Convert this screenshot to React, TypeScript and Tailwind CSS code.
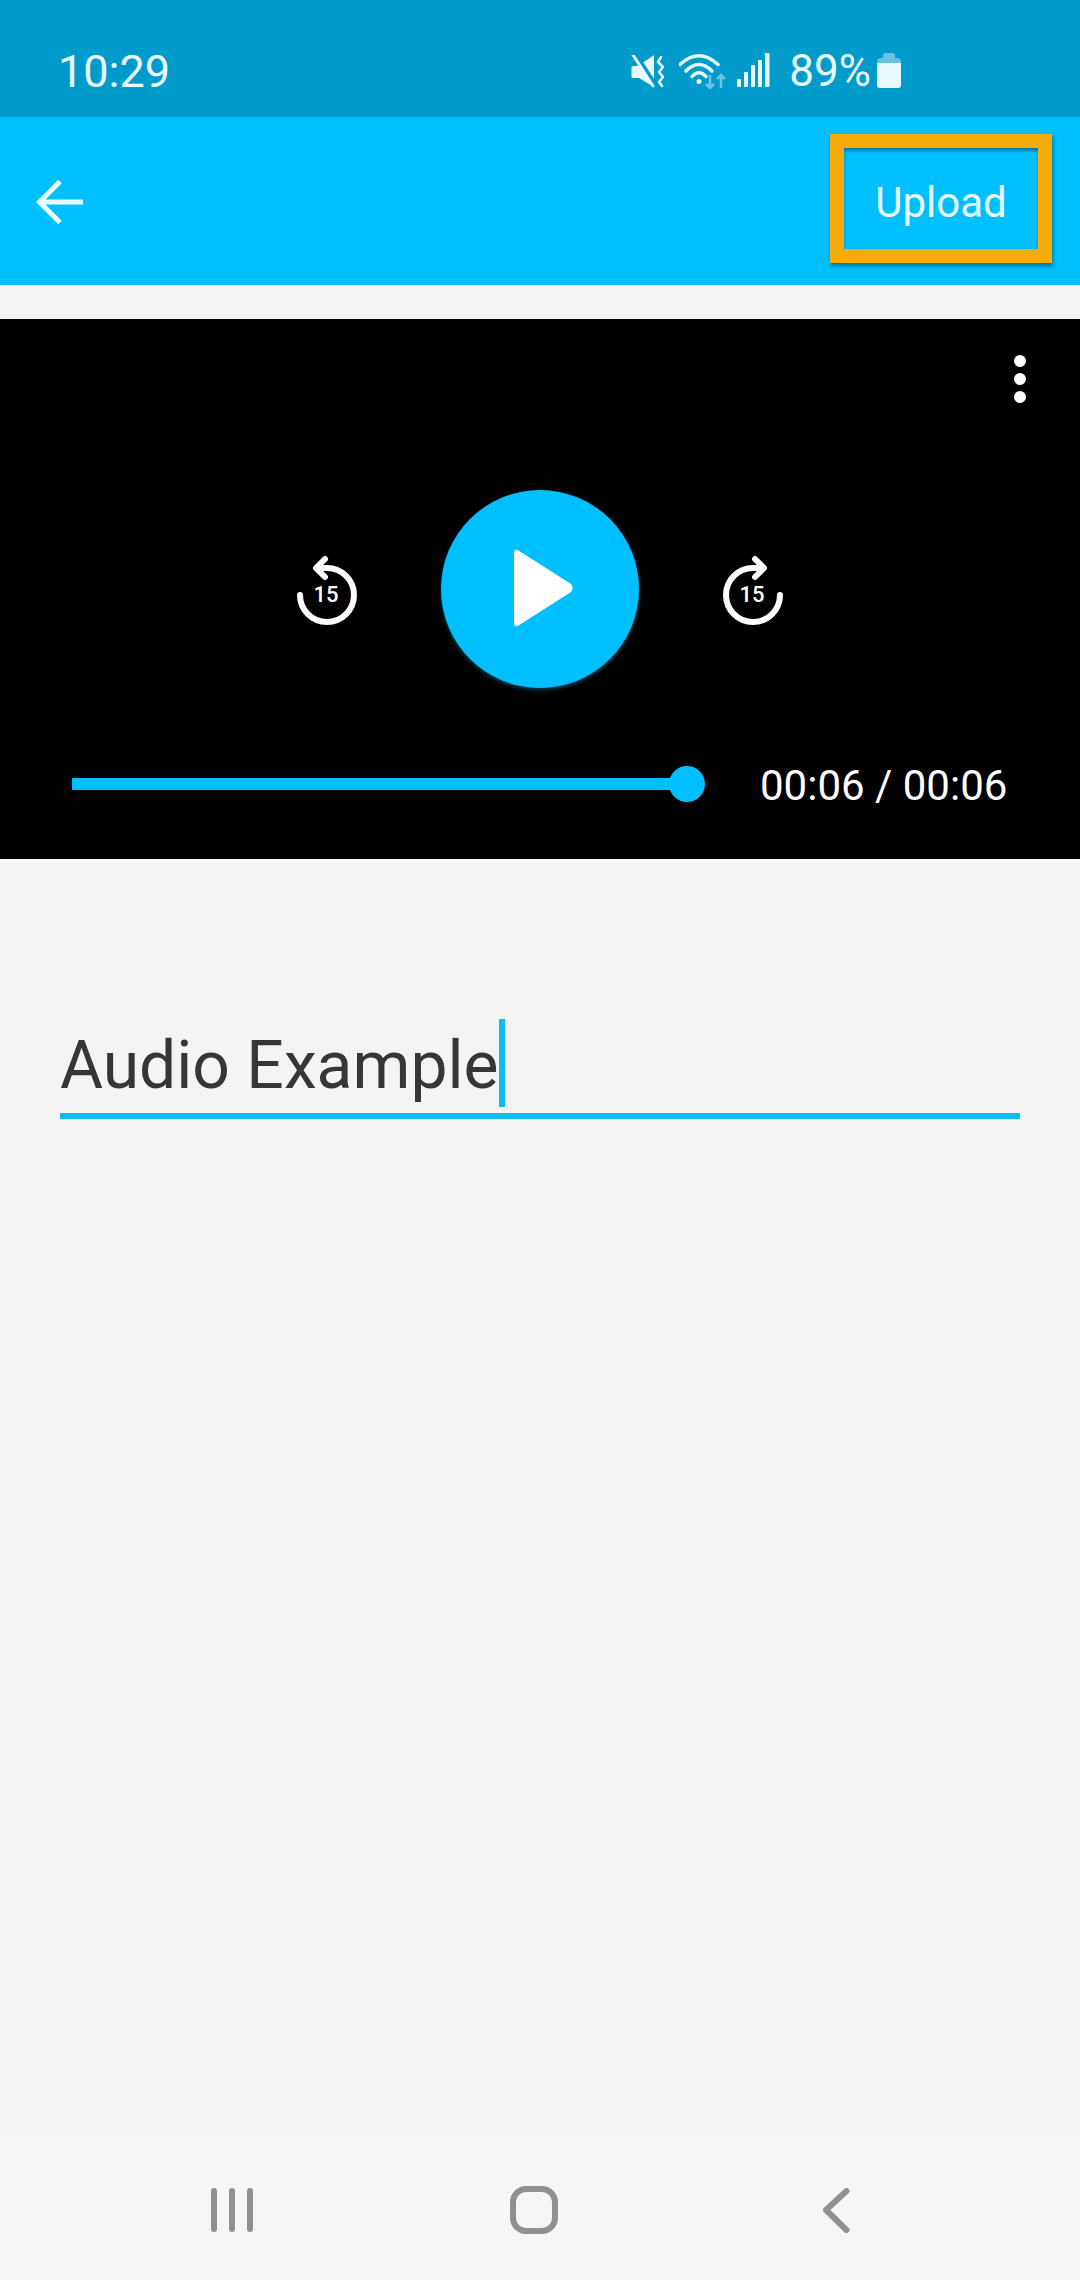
function StatusIcons() {
  return (
    <div className="flex items-start">
      {/* mute */}
      <svg width="36" height="34" viewBox="0 0 36 34" fill="none" className="ml-[1px] mt-[1px]">
        <path d="M2 11h5L23 0v32L8 23H2q-1.500 0-1.500-1.500v-9Q.5 11 2 11z" fill="#e8f8fc" />
        <path d="M4 -1l22 34" stroke="#019bcb" strokeWidth="5" />
        <path d="M2 0l20 31" stroke="#e8f8fc" strokeWidth="3" strokeLinecap="round" />
        <path d="M30 2l-3 5 5 5-4 5 4 5-4 5 3 4" stroke="#e8f8fc" strokeWidth="2.500" strokeLinecap="round" strokeLinejoin="round" />
      </svg>
      {/* wifi with data arrows */}
      <svg width="48" height="36" viewBox="0 0 48 36" fill="none" className="ml-[12px] -mt-[1px]">
        <path d="M1 11.500Q20-6 39 11.500" stroke="#e8f8fc" strokeWidth="3.500" strokeLinecap="round" />
        <path d="M7 18Q20 5 33 18" stroke="#e8f8fc" strokeWidth="3.500" strokeLinecap="round" />
        <path d="M13 23.500Q20 16 27 23.500" stroke="#e8f8fc" strokeWidth="3.500" strokeLinecap="round" />
        <circle cx="20" cy="28.500" r="2.500" fill="#e8f8fc" />
        <path d="M31 22v13m-4-4l4 4 4-4M42 35V22m-4 4l4-4 4 4" stroke="#6fc3e0" strokeWidth="2.500" />
      </svg>
      {/* signal */}
      <svg width="33" height="34" viewBox="0 0 33 34" className="ml-[10px] -mt-[1px]" fill="#e8f8fc">
        <rect x="0" y="26" width="4" height="8" rx="1" />
        <rect x="7" y="19" width="4" height="15" rx="1" />
        <rect x="14" y="12" width="4" height="22" rx="1" />
        <rect x="21" y="7" width="4" height="27" rx="1" />
        <rect x="28" y="0" width="4.500" height="34" rx="1" />
      </svg>
      <span className="ml-[19px] -mt-[8px] text-[44px] leading-[50px] text-[#e8f8fc]">89%</span>
      {/* battery */}
      <svg width="24" height="35" viewBox="0 0 24 35" className="ml-[6px] -mt-[1px]">
        <path d="M6 5V2q0-2 2-2h8q2 0 2 2v3h2q4 0 4 4v2H0V9q0-4 4-4z" fill="#6cc0df" />
        <path d="M0 10h24v22q0 3-3 3H3q-3 0-3-3z" fill="#e8f8fc" />
      </svg>
    </div>
  );
}

function Skip15({ forward }: { forward?: boolean }) {
  return (
    <svg width="70" height="80" viewBox="0 0 70 80" fill="none" className="mt-[6px]">
      <g transform={forward ? "translate(70 0) scale(-1 1)" : undefined} stroke="#fff" strokeWidth="6" strokeLinecap="round" strokeLinejoin="round">
        <path d="M8 43A27 27 0 1 0 35 16H26" />
        <path d="M33 7l-9 9 9 9" />
      </g>
      <text x="34" y="50" textAnchor="middle" fill="#fff" fontSize="22" fontWeight="500" fontFamily="Roboto, sans-serif">
        15
      </text>
    </svg>
  );
}

export default function App() {
  return (
    <div className="flex h-[2280px] w-[1080px] flex-col overflow-hidden bg-[#f4f4f4] font-['Roboto',sans-serif]">
      {/* status bar */}
      <div className="flex h-[117px] shrink-0 items-start justify-between bg-[#019bcb] pl-[58px] pr-[179px] pt-[46px]">
        <span className="mt-[1px] text-[45px] leading-[50px] text-[#e8f8fc]">10:29</span>
        <div className="pt-[8px]">
          <StatusIcons />
        </div>
      </div>

      {/* app bar */}
      <div className="flex h-[168px] shrink-0 items-center justify-between bg-[#00bfff] pl-[36px] pr-[28px]">
        <svg width="48" height="48" viewBox="0 0 48 48" fill="none" className="mt-[1px]">
          <path d="M47 24H4M24 3.500L3.500 24 24 44.500" stroke="#e8f9ff" strokeWidth="5" strokeLinejoin="miter" />
        </svg>
        <div className="mb-[5px] flex h-[129px] w-[222px] items-center justify-center border-[14px] border-[#f7ab07] shadow-[1px_3px_4px_rgba(0,0,0,0.4),inset_0_3px_3px_rgba(0,0,0,0.35)]">
          <span className="mt-[8px] text-[42px] leading-[50px] text-[#e8f9ff]">Upload</span>
        </div>
      </div>

      {/* audio player */}
      <div className="mt-[34px] flex h-[540px] shrink-0 flex-col bg-black">
        <div className="flex justify-end pr-[50px] pt-[36px]">
          <svg width="20" height="48" viewBox="0 0 20 48" fill="#fff">
            <circle cx="10" cy="6" r="6" />
            <circle cx="10" cy="24" r="6" />
            <circle cx="10" cy="42" r="6" />
          </svg>
        </div>
        <div className="mt-[87px] flex items-center justify-center gap-[79px]">
          <Skip15 />
          <div className="flex h-[198px] w-[198px] items-center justify-center rounded-full bg-[#00bfff] shadow-[0_2px_4px_rgba(0,191,255,0.35)]">
            <svg width="60" height="78" viewBox="0 0 60 78" fill="#fff" className="-mt-[2px] ml-[7px]">
              <path d="M0 4Q0-1 4.500 1.500L57 35q3 4 0 8L4.500 76.500Q0 79 0 74z" />
            </svg>
          </div>
          <Skip15 forward />
        </div>
        <div className="mt-[78px] flex items-center pl-[72px]">
          <div className="h-[12px] w-[600px] bg-[#00bfff]" />
          <div className="-ml-[3px] h-[36px] w-[36px] rounded-full bg-[#00bfff]" />
          <span className="ml-[55px] mt-[3px] text-[42px] leading-[32px] text-white">00:06 / 00:06</span>
        </div>
      </div>

      {/* title input */}
      <div className="mx-[60px] mt-[160px]">
        <div className="flex h-[88px] items-start">
          <span className="mt-[3px] text-[66px] leading-[88px] text-[#363636]">Audio Example</span>
          <div className="h-[88px] w-[6px] bg-[#10bbf0]" />
        </div>
        <div className="mt-[6px] h-[6px] bg-[#10bbf0]" />
      </div>

      {/* navigation bar */}
      <div className="mt-auto flex h-[144px] shrink-0 items-start bg-[#f6f6f6] pl-[211px] pt-[50px]">
        <svg width="42" height="48" viewBox="0 0 42 48" className="mt-[2px]" fill="#909090">
          <rect x="0" y="0" width="6" height="44" rx="3" />
          <rect x="18" y="0" width="6" height="44" rx="3" />
          <rect x="36" y="0" width="6" height="44" rx="3" />
        </svg>
        <div className="ml-[257px] h-[48px] w-[48px] rounded-[16px] border-[6px] border-[#909090]" />
        <svg width="28" height="48" viewBox="0 0 28 48" fill="none" className="ml-[264px] mt-[2px]">
          <path d="M24.500 3L4 22l20.500 20" stroke="#909090" strokeWidth="6" strokeLinecap="round" strokeLinejoin="round" />
        </svg>
      </div>
    </div>
  );
}
